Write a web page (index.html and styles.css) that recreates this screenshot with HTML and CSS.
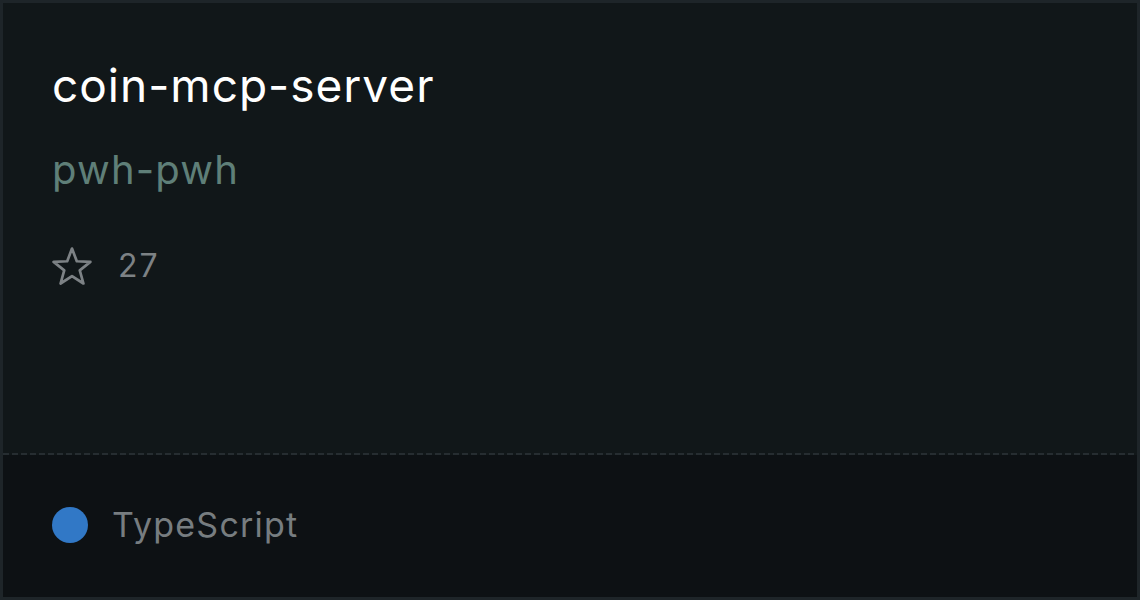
FILE: index.html
```html
<!DOCTYPE html>
<html>
<head>
<meta charset="utf-8">
<link rel="stylesheet" href="styles.css">
</head>
<body>
<div class="card">
  <div class="main">
    <div class="title">coin-mcp-server</div>
    <div class="owner">pwh-pwh</div>
    <div class="stars">
      <svg class="star" viewBox="0 0 40 38" width="40" height="38" fill="none" stroke="#7d8285" stroke-width="2.7" stroke-linejoin="round">
        <path d="M20 1.6L24.8 14.24L38.4 14.84L27.77 23.37L31.43 36.5L20 29.02L8.57 36.5L12.23 23.37L1.6 14.84L15.2 14.24Z"/>
      </svg>
      <span class="count">27</span>
    </div>
  </div>
  <div class="divider"></div>
  <div class="footer">
    <span class="dot"></span>
    <span class="lang">TypeScript</span>
  </div>
</div>
</body>
</html>
```
FILE: styles.css
```css
html, body {
  margin: 0;
  padding: 0;
  background: #1e2529;
}
.card {
  box-sizing: border-box;
  width: 1140px;
  height: 600px;
  border: 3px solid #1e2529;
  background: #111719;
  display: flex;
  flex-direction: column;
  font-family: Inter, "Noto Sans", sans-serif;
}
.main {
  height: 450px;
  padding: 0 49px;
  box-sizing: border-box;
}
.title {
  color: #ffffff;
  font-size: 46px;
  line-height: 56px;
  letter-spacing: 1px;
  margin-top: 54px;
}
.owner {
  color: #5f7f78;
  font-size: 40px;
  line-height: 48px;
  letter-spacing: 1.2px;
  margin-top: 33px;
}
.stars {
  display: flex;
  align-items: center;
  height: 40px;
  margin-top: 52px;
  gap: 26px;
}
.star {
  display: block;
}
.count {
  color: #7d8285;
  font-size: 32px;
  line-height: 40px;
  letter-spacing: 2px;
}
.divider {
  height: 2px;
  background: repeating-linear-gradient(90deg, #262d31 0 6px, transparent 6px 9px);
}
.footer {
  flex: 1;
  background: #0d1114;
  display: flex;
  align-items: center;
  padding: 0 49px 2px;
  gap: 24px;
}
.dot {
  width: 36px;
  height: 36px;
  border-radius: 50%;
  background: #3178c6;
}
.lang {
  color: #777d80;
  font-size: 34px;
  line-height: 40px;
  letter-spacing: 1.2px;
}
```
